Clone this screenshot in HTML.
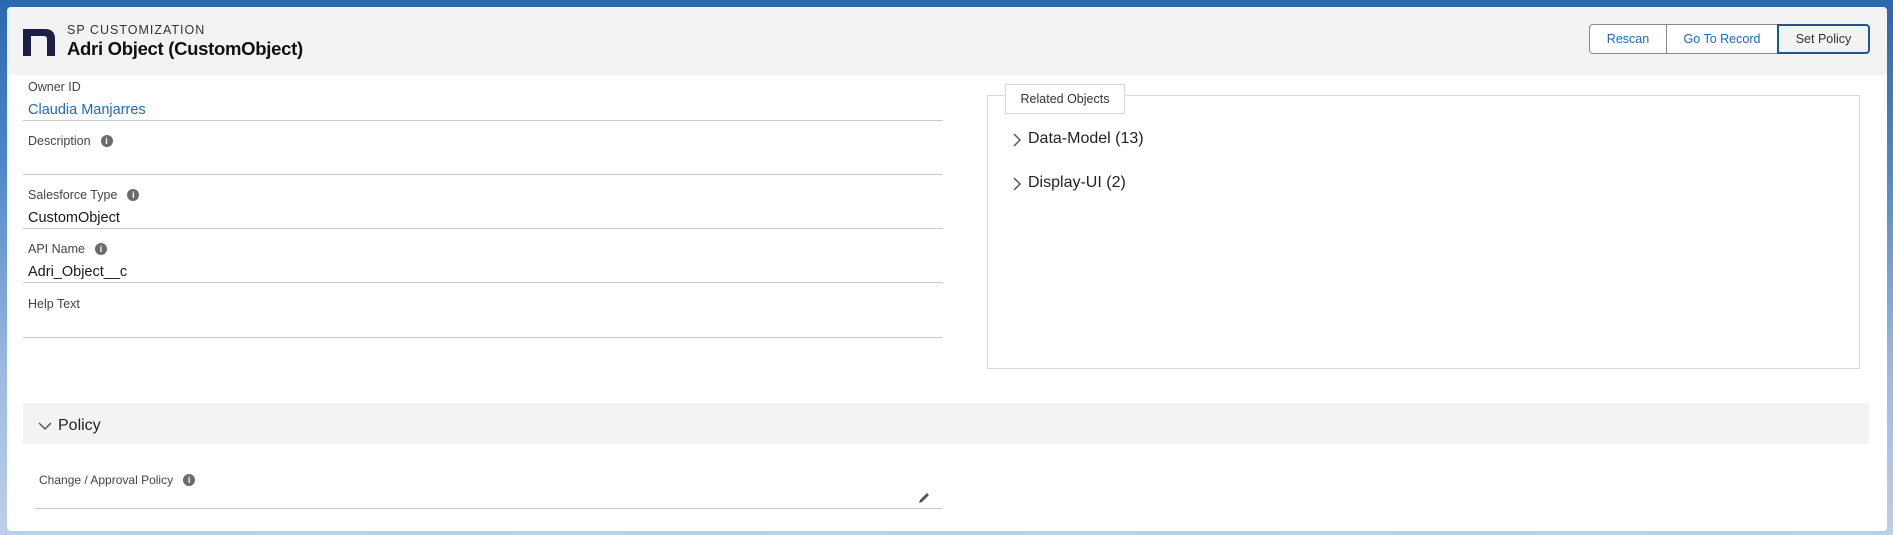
<!DOCTYPE html>
<html><head><style>
*{margin:0;padding:0;box-sizing:border-box}
body{width:1893px;height:535px;overflow:hidden;font-family:"Liberation Sans",sans-serif;background:linear-gradient(180deg,#2a68b0 0%,#4d86c4 30%,#9dbbe0 70%,#bccfe8 100%);position:relative}
.card{position:absolute;left:7px;top:7px;width:1880px;height:524px;background:#fff;border-radius:4px;overflow:hidden}
.hdr{position:absolute;left:0;top:0;width:100%;height:68px;background:#f3f3f3}
.a{position:absolute;white-space:nowrap}
.lbl{font-size:12.5px;color:#444}
.val{font-size:14.5px;color:#181818}
.line{position:absolute;height:1px;background:#c9c9c9}
.info{display:inline-block;width:12px;height:12px;border-radius:50%;background:#6b6b6b;color:#fff;font-size:9px;font-weight:bold;text-align:center;line-height:12px;margin-left:10px;vertical-align:1px}
.btn{position:absolute;top:17px;height:30px;border:1px solid #8a8a8a;background:#fff;color:#1b6bbf;font-size:12.5px;text-align:center;line-height:28px}
</style></head><body>
<div class="card">
<div class="hdr"></div>
<svg class="a" style="left:16px;top:18px" width="32" height="32" viewBox="0 0 32 32"><path d="M0 4 H22 Q32 4 32 14 V31 H24 V14 Q24 11 21 11 H8 V31 H0 Z" fill="#1d1f45"/></svg>
<div class="a" style="left:60px;top:16px;font-size:12.5px;letter-spacing:1px;color:#333">SP CUSTOMIZATION</div>
<div class="a" style="left:60px;top:31px;font-size:18.5px;font-weight:bold;color:#111;letter-spacing:-0.3px">Adri Object (CustomObject)</div>
<div class="btn" style="left:1582px;width:78px;border-radius:4px 0 0 4px">Rescan</div>
<div class="btn" style="left:1659px;width:112px;border-left:1px solid #8a8a8a">Go To Record</div>
<div class="btn" style="left:1770px;width:93px;border:2px solid #1f5596;border-radius:0 4px 4px 0;background:#f3f3f3;color:#333;line-height:26px">Set Policy</div>

<div class="a lbl" style="left:21px;top:73px">Owner ID</div>
<div class="a val" style="left:21px;top:95px;color:#1b6bbf">Claudia Manjarres</div>
<div class="line" style="left:16px;top:113px;width:920px"></div>
<div class="a lbl" style="left:21px;top:127px">Description<span class="info">i</span></div>
<div class="line" style="left:16px;top:167px;width:920px"></div>
<div class="a lbl" style="left:21px;top:181px">Salesforce Type<span class="info">i</span></div>
<div class="a val" style="left:21px;top:203px">CustomObject</div>
<div class="line" style="left:16px;top:221px;width:920px"></div>
<div class="a lbl" style="left:21px;top:235px">API Name<span class="info">i</span></div>
<div class="a val" style="left:21px;top:257px">Adri_Object__c</div>
<div class="line" style="left:16px;top:275px;width:920px"></div>
<div class="a lbl" style="left:21px;top:290px">Help Text</div>
<div class="line" style="left:16px;top:330px;width:920px"></div>

<div class="a" style="left:980px;top:88px;width:873px;height:274px;border:1px solid #d8d8d8"></div>
<div class="a lbl" style="left:998px;top:77px;width:120px;height:30px;border:1px solid #d8d8d8;background:#fff;line-height:28px;text-align:center;color:#333">Related Objects</div>
<svg class="a" style="left:1005px;top:126px" width="10" height="14"><path d="M2 1 L8 7 L2 13" stroke="#555" stroke-width="1.5" fill="none"/></svg>
<div class="a" style="left:1021px;top:123px;font-size:16px;color:#222">Data-Model (13)</div>
<svg class="a" style="left:1005px;top:170px" width="10" height="14"><path d="M2 1 L8 7 L2 13" stroke="#555" stroke-width="1.5" fill="none"/></svg>
<div class="a" style="left:1021px;top:167px;font-size:16px;color:#222">Display-UI (2)</div>

<div class="a" style="left:16px;top:396px;width:1846px;height:41px;background:#f3f3f3"></div>
<svg class="a" style="left:31px;top:414px" width="14" height="10"><path d="M1 2 L7 8 L13 2" stroke="#555" stroke-width="1.5" fill="none"/></svg>
<div class="a" style="left:51px;top:410px;font-size:16px;color:#222">Policy</div>
<div class="a lbl" style="left:32px;top:466px;font-size:12px">Change / Approval Policy<span class="info">i</span></div>
<svg class="a" style="left:910px;top:484px" width="14" height="14"><path d="M2 12 L3 9 L10 2 L12 4 L5 11 Z" fill="#555"/></svg>
<div class="line" style="left:28px;top:501px;width:907px"></div>
</div>
</body></html>
